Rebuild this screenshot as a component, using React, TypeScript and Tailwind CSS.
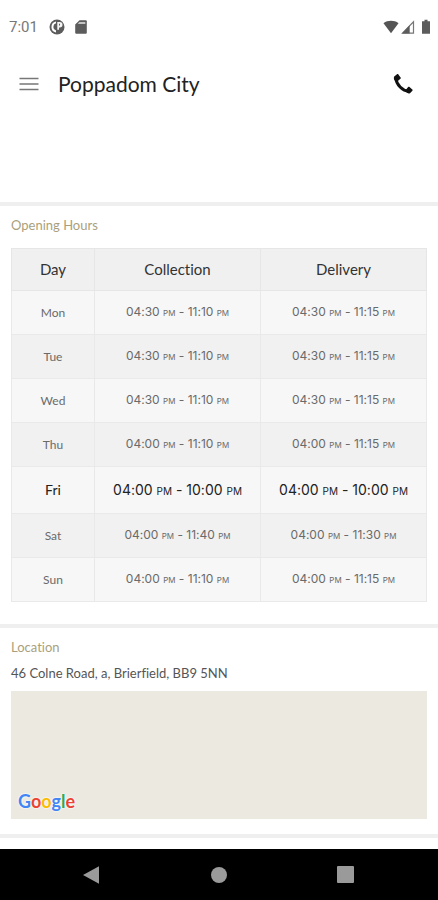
import React from "react";

type Time = { start: string; end: string };
type Row = { day: string; collection: Time; delivery: Time; today?: boolean };

const t = (start: string, end: string): Time => ({ start, end });

const hours: Row[] = [
  { day: "Mon", collection: t("04:30", "11:10"), delivery: t("04:30", "11:15") },
  { day: "Tue", collection: t("04:30", "11:10"), delivery: t("04:30", "11:15") },
  { day: "Wed", collection: t("04:30", "11:10"), delivery: t("04:30", "11:15") },
  { day: "Thu", collection: t("04:00", "11:10"), delivery: t("04:00", "11:15") },
  { day: "Fri", collection: t("04:00", "10:00"), delivery: t("04:00", "10:00"), today: true },
  { day: "Sat", collection: t("04:00", "11:40"), delivery: t("04:00", "11:30") },
  { day: "Sun", collection: t("04:00", "11:10"), delivery: t("04:00", "11:15") },
];

function StatusBar() {
  return (
    <div className="flex h-[54px] items-center pl-[9px] pr-2 text-[#777]">
      <span className="font-['Roboto',sans-serif] text-[15px] leading-5">7:01</span>
      <svg className="ml-[11px] size-4" viewBox="0 0 16 16" aria-hidden="true">
        <circle cx="8" cy="8" r="7.5" fill="#5c5c5c" />
        <path d="M7 2.400A5.600 5.600 0 0 0 7 13.400V11.600A3.900 3.900 0 0 1 7 4.200Z" fill="#fff" />
        <path d="M8.300 3h2.500a2.700 2.700 0 0 1 0 5.400H10v2.400H8.300Z" fill="#f4f4f4" />
        <path d="M10 4.800h1v1.800h-1z" fill="#5c5c5c" />
      </svg>
      <svg className="ml-2 h-4 w-4" viewBox="0 0 16 16" aria-hidden="true">
        <path d="M6.500 1.200h6.300a1 1 0 0 1 1 1v11.600a1 1 0 0 1-1 1H3.200a1 1 0 0 1-1-1V5.500Z" fill="#5c5c5c" />
        <path d="M6.300 3h6v2H4.800Z" fill="#c4c4c4" />
      </svg>
      <div className="ml-auto flex items-center">
        <svg className="h-4 w-4" viewBox="0 0 16 16" aria-hidden="true">
          <path d="M8 14.200.5 4.200C4.800 1 11.200 1 15.500 4.200Z" fill="#555" />
        </svg>
        <svg className="ml-0.5 h-4 w-3.5" viewBox="0 0 14 16" aria-hidden="true">
          <path d="M1.500 14.200H12.500V2.800Z" fill="#fff" stroke="#777" strokeWidth="1.200" />
          <path d="M1 14.500H8.700V6.300Z" fill="#5c5c5c" />
        </svg>
        <svg className="ml-[7px] h-4 w-2" viewBox="0 0 8 16" aria-hidden="true">
          <path d="M2.500.8h3v1.400H8v12.600H0V2.200h2.500Z" fill="#5c5c5c" />
        </svg>
      </div>
    </div>
  );
}

function TopBar() {
  return (
    <header className="flex h-[60px] items-center pl-[19px] pr-[25px]">
      <button type="button" aria-label="Open menu" className="flex h-6 w-5 items-center">
        <svg className="h-4 w-5" viewBox="0 0 20 16" aria-hidden="true">
          <path d="M.5 2.500h19M.5 8h19M.5 13.500h19" stroke="#777" strokeWidth="1.700" />
        </svg>
      </button>
      <h1 className="ml-[19px] text-[21px] leading-7 text-[#222]">Poppadom City</h1>
      <button type="button" aria-label="Call" className="ml-auto">
        <svg className="h-5 w-5" viewBox="0 0 20 20" aria-hidden="true">
          <path d="M3 4.500C3.200 10.500 9.500 17 15.800 17.300" fill="none" stroke="#111" strokeWidth="3" />
          <path d="M1.200 2.600 4 .3c.5-.4 1-.3 1.400.2l2.200 2.900c.4.500.3 1-.2 1.400L4.600 7.200C2 7.500 0 5.500 1.200 2.600Z" fill="#111" />
          <path d="m17 19.200 2.400-2.400c.4-.5.400-1-.1-1.400l-2.800-2.500c-.5-.4-1-.3-1.400.2l-2.300 2.800c-.3 2.300 1.700 4.300 4.200 3.300Z" fill="#111" />
        </svg>
      </button>
    </header>
  );
}

function Range({ time, today }: { time: Time; today?: boolean }) {
  const small = today ? "text-[10px]" : "text-[8px]";
  return (
    <>
      {time.start} <span className={small}>PM</span> - {time.end} <span className={small}>PM</span>
    </>
  );
}

function HoursTable() {
  return (
    <table className="w-full table-fixed border-collapse border border-[#e2e2e2] text-center" aria-labelledby="hours-title">
      <thead>
        <tr className="h-[42px] bg-[#f0f0f0] text-[15px] leading-5 text-[#333]">
          <th scope="col" className="w-1/5 border border-[#e6e6e6] pb-0.5 font-normal">Day</th>
          <th scope="col" className="w-2/5 border border-[#e6e6e6] pb-0.5 font-normal">Collection</th>
          <th scope="col" className="w-2/5 border border-[#e6e6e6] pb-0.5 font-normal">Delivery</th>
        </tr>
      </thead>
      <tbody>
        {hours.map((row) => (
          <tr
            key={row.day}
            className={
              row.today
                ? "h-[47px] bg-[#f7f7f7] text-[14px] leading-5 text-[#222]"
                : "h-11 text-[12px] leading-5 text-[#6a6a6a] odd:bg-[#f7f7f7] even:bg-[#f1f1f1]"
            }
          >
            <th scope="row" className="border border-[#e9e9e9] font-normal">{row.day}</th>
            <td className="border border-[#e9e9e9] font-['Inter',sans-serif]"><Range time={row.collection} today={row.today} /></td>
            <td className="border border-[#e9e9e9] font-['Inter',sans-serif]"><Range time={row.delivery} today={row.today} /></td>
          </tr>
        ))}
      </tbody>
    </table>
  );
}

function NavBar() {
  return (
    <nav className="mt-auto flex h-[51px] items-center justify-between bg-black pl-[81px] pr-[84px]" aria-label="System">
      <button type="button" aria-label="Back">
        <svg className="h-5 w-5" viewBox="0 0 20 20" aria-hidden="true">
          <path d="M2 10 18 1.200v17.600Z" fill="#9a9a9a" />
        </svg>
      </button>
      <button type="button" aria-label="Home" className="size-4 rounded-full bg-[#9a9a9a]" />
      <button type="button" aria-label="Recent apps" className="size-[17px] rounded-[1px] bg-[#9a9a9a]" />
    </nav>
  );
}

export default function App() {
  return (
    <div className="flex min-h-screen flex-col bg-white font-['Lato',sans-serif] [font-variant-ligatures:none]">
      <StatusBar />
      <TopBar />
      <main>
        <div className="h-22" />
        <section className="border-t-4 border-[#efefef] px-[11px] pb-[22px] pt-[9px]">
          <h2 id="hours-title" className="mb-[13px] text-[13px] leading-5 text-[#aa9f7c]">Opening Hours</h2>
          <HoursTable />
        </section>
        <section className="border-y-4 border-[#efefef] px-[11px] pb-[15px] pt-[9px]">
          <h2 className="text-[13px] leading-5 text-[#aa9f7c]">Location</h2>
          <p className="mb-2 mt-1.5 text-[13px] leading-5 text-[#555]">46 Colne Road, a, Brierfield, BB9 5NN</p>
          <div className="flex h-32 items-end bg-[#ebe9e0] pb-1 pl-[7px]">
            <a href="#map" className="text-[18px] font-bold leading-7 [text-shadow:0_0_2px_#fff,0_0_2px_#fff]">
              <span className="text-[#4285f4]">G</span>
              <span className="text-[#ea4335]">o</span>
              <span className="text-[#fbbc05]">o</span>
              <span className="text-[#4285f4]">g</span>
              <span className="text-[#34a853]">l</span>
              <span className="text-[#ea4335]">e</span>
            </a>
          </div>
        </section>
      </main>
      <NavBar />
    </div>
  );
}
